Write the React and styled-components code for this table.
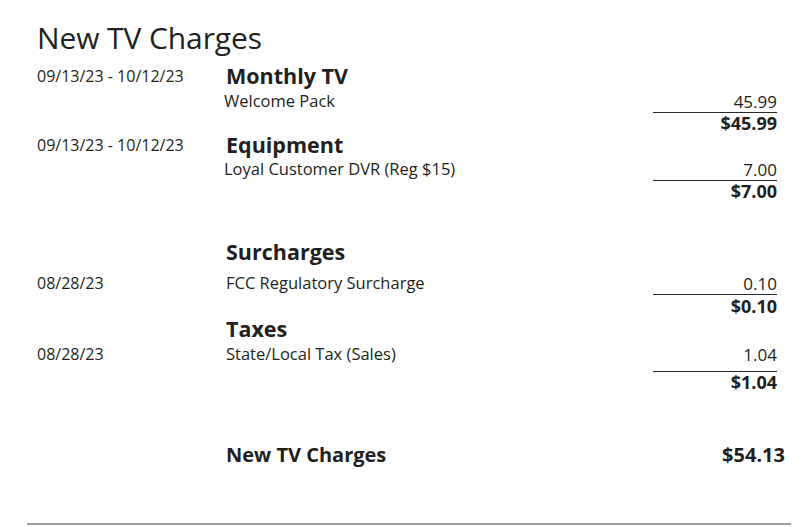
import React from 'react';
import styled, { createGlobalStyle } from 'styled-components';

const GlobalStyle = createGlobalStyle`
  body {
    margin: 0;
    background: #fff;
    font-family: 'Open Sans', 'Liberation Sans', sans-serif;
    color: #231f20;
  }
`;

const Page = styled.div`
  width: 764px;
  padding: 19px 0 0 27px;
  background: #fff;
`;

const Title = styled.h1`
  margin: 0;
  padding-left: 10px;
  font-size: 30px;
  font-weight: 400;
  line-height: 38px;
  letter-spacing: -0.1px;
`;

const Group = styled.div`
  margin-top: ${(p) => p.$top || 0}px;
`;

const Row = styled.div`
  display: grid;
  grid-template-columns: 187px 1fr 124px;
  align-items: center;
  padding: 0 ${(p) => p.$right || 14}px 0 10px;
  height: ${(p) => p.$h || 20}px;
  margin-top: ${(p) => p.$top || 0}px;
`;

const DateCell = styled.div`
  font-size: 16px;
  line-height: 20px;
`;

const Heading = styled.div`
  font-size: 21.5px;
  font-weight: 700;
  line-height: 28px;
  padding-left: 2px;
`;

const Desc = styled.div`
  font-size: 16.5px;
  line-height: 20px;
  padding-left: ${(p) => p.$indent || 0}px;
`;

const Amount = styled.div`
  font-size: 17px;
  line-height: 19px;
  text-align: right;
`;

const SubtotalCell = styled.div`
  grid-column: 3;
  border-top: 1px solid #2a2a2a;
  text-align: right;
  font-size: 18px;
  font-weight: 700;
  line-height: 16px;
  padding-top: ${(p) => p.$pad || 0}px;
`;

const TotalLabel = styled.div`
  grid-column: 2;
  font-size: 20px;
  font-weight: 700;
  line-height: 28px;
  padding-left: 2px;
`;

const TotalAmount = styled.div`
  font-size: 20px;
  font-weight: 700;
  line-height: 28px;
  text-align: right;
`;

const Rule = styled.hr`
  margin: ${(p) => p.$top || 0}px 0 0;
  border: 0;
  border-top: 2px solid #9a9a9a;
`;

const Subtotal = ({ value, pad, top }) => (
  <Row $h={17 + (pad || 0)} $top={top}>
    <SubtotalCell $pad={pad}>{value}</SubtotalCell>
  </Row>
);

const App = () => (
  <Page>
    <GlobalStyle />
    <Title>New TV Charges</Title>

    <Group $top={5}>
      <Row $h={28}>
        <DateCell>09/13/23 - 10/12/23</DateCell>
        <Heading>Monthly TV</Heading>
      </Row>
      <Row $top={1}>
        <div />
        <Desc>Welcome Pack</Desc>
        <Amount>45.99</Amount>
      </Row>
      <Subtotal value="$45.99" pad={2} top={1} />
    </Group>

    <Group $top={0}>
      <Row $h={28}>
        <DateCell>09/13/23 - 10/12/23</DateCell>
        <Heading>Equipment</Heading>
      </Row>
      <Row $top={0}>
        <div />
        <Desc>Loyal Customer DVR (Reg $15)</Desc>
        <Amount>7.00</Amount>
      </Row>
      <Subtotal value="$7.00" pad={2} top={1} />
    </Group>

    <Group $top={39}>
      <Row $h={28}>
        <div />
        <Heading>Surcharges</Heading>
      </Row>
      <Row $top={7}>
        <DateCell>08/28/23</DateCell>
        <Desc $indent={2}>FCC Regulatory Surcharge</Desc>
        <Amount>0.10</Amount>
      </Row>
      <Subtotal value="$0.10" pad={3} top={1} />
    </Group>

    <Group $top={1}>
      <Row $h={28}>
        <div />
        <Heading>Taxes</Heading>
      </Row>
      <Row $top={1}>
        <DateCell>08/28/23</DateCell>
        <Desc $indent={2}>State/Local Tax (Sales)</Desc>
        <Amount>1.04</Amount>
      </Row>
      <Subtotal value="$1.04" pad={2} top={7} />
    </Group>

    <Row $h={28} $top={51} $right={6}>
      <TotalLabel>New TV Charges</TotalLabel>
      <TotalAmount>$54.13</TotalAmount>
    </Row>

    <Rule $top={54} />
  </Page>
);

export default App;
